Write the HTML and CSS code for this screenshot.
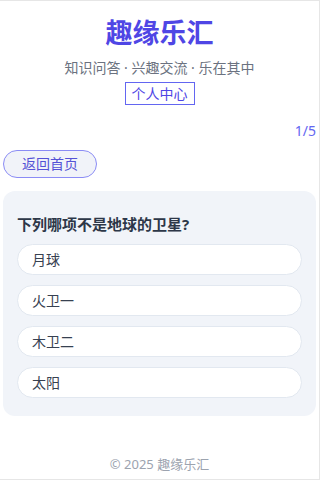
FILE: index.html
```html
<!DOCTYPE html>
<html lang="zh-CN">
<head>
<meta charset="utf-8">
<title>趣缘乐汇</title>
<link rel="stylesheet" href="styles.css">
</head>
<body>
<div class="page">
  <header class="header">
    <h1 class="title">趣缘乐汇</h1>
    <p class="subtitle">知识问答 · 兴趣交流 · 乐在其中</p>
    <a class="profile-link" href="#">个人中心</a>
  </header>
  <div class="progress">1/5</div>
  <div class="back-row"><button class="back-btn">返回首页</button></div>
  <section class="card">
    <h2 class="question">下列哪项不是地球的卫星?</h2>
    <div class="options">
      <button class="option">月球</button>
      <button class="option">火卫一</button>
      <button class="option">木卫二</button>
      <button class="option">太阳</button>
    </div>
  </section>
  <footer class="footer">© 2025 趣缘乐汇</footer>
</div>
</body>
</html>
```
FILE: styles.css
```css
html, body {
  margin: 0;
  padding: 0;
  background: #ffffff;
}
body {
  font-family: "Noto Sans", "Noto Sans CJK SC", sans-serif;
}
.page {
  box-sizing: border-box;
  width: 320px;
  height: 480px;
  border-top: 1px solid #e6e6e6;
  border-right: 1px solid #e6e6e6;
  border-bottom: 1px solid #e6e6e6;
  padding: 0 3px;
  display: flex;
  flex-direction: column;
}
.header {
  text-align: center;
}
.title {
  margin: 16px 0 0;
  font-size: 27px;
  line-height: 32px;
  font-weight: 700;
  color: #4f46e5;
}
.subtitle {
  margin: 9px 0 0;
  font-size: 14px;
  line-height: 20px;
  color: #6b7280;
}
.profile-link {
  display: inline-block;
  margin-top: 4px;
  padding: 0 6px;
  border: 1px solid #6366f1;
  font-size: 14px;
  line-height: 21px;
  color: #4f46e5;
  text-decoration: none;
}
.progress {
  margin-top: 16px;
  text-align: right;
  font-size: 14px;
  line-height: 20px;
  color: #6366f1;
}
.back-row {
  display: flex;
  margin-top: 9px;
}
.back-btn {
  font-family: inherit;
  font-size: 14px;
  line-height: 26px;
  padding: 0 18px;
  border: 1px solid #8b8cf5;
  border-radius: 14px;
  background: #f1f3f9;
  color: #5552d6;
}
.card {
  margin-top: 13px;
  background: #f1f4f9;
  border-radius: 12px;
  padding: 22px 14px 18px;
}
.question {
  margin: 0;
  font-size: 15px;
  line-height: 22px;
  font-weight: 700;
  color: #2d3748;
}
.options {
  margin-top: 9px;
  display: flex;
  flex-direction: column;
  gap: 10px;
}
.option {
  font-family: inherit;
  text-align: left;
  font-size: 14px;
  line-height: 29px;
  padding: 0 14px;
  background: #ffffff;
  border: 1px solid #e2e8f0;
  border-radius: 16px;
  color: #374151;
}
.footer {
  margin-top: auto;
  padding-bottom: 6px;
  text-align: center;
  font-size: 13px;
  line-height: 18px;
  color: #9ca3af;
}
```
